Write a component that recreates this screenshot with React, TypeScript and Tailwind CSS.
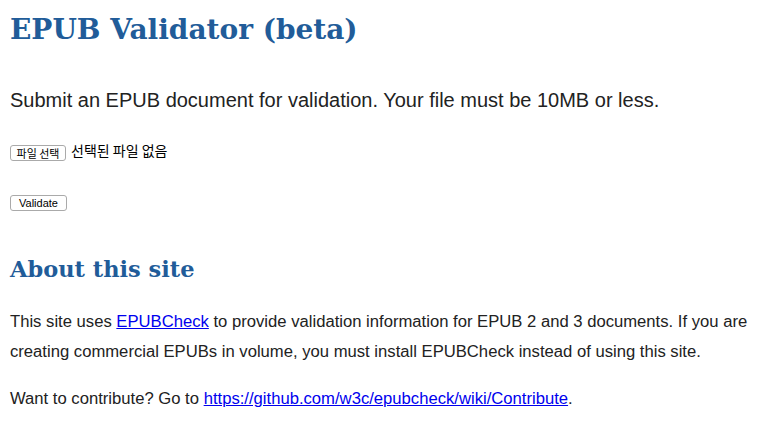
export default function App() {
  return (
    <div className="min-h-[429px] bg-white px-[10px] text-[#222]" style={{ fontFamily: '"Liberation Sans", Arial, sans-serif' }}>
      <h1 className="pt-[12px] text-[28px] font-bold leading-[36px] text-[#215c99]" style={{ fontFamily: '"DejaVu Serif", Georgia, serif' }}>
        EPUB Validator (beta)
      </h1>
      <p className="mt-[40px] text-[20px] leading-[24px]">
        Submit an EPUB document for validation. Your file must be 10MB or less.
      </p>
      <div className="mt-[28px] flex items-center gap-[5px]">
        <button className="mt-[5px] h-[16px] w-[56px] rounded-[3px] border border-[#aaa] bg-white text-[11px] leading-[14px] text-black" style={{ fontFamily: '"Noto Sans CJK KR", sans-serif' }}>
          파일 선택
        </button>
        <span className="text-[14px] text-black" style={{ fontFamily: '"Noto Sans CJK KR", sans-serif' }}>선택된 파일 없음</span>
      </div>
      <div className="mt-[29px]">
        <button className="h-[16px] w-[57px] rounded-[3px] border border-[#aaa] bg-white text-[11px] leading-[14px] text-black">
          Validate
        </button>
      </div>
      <h2 className="mt-[40px] text-[22.5px] font-bold leading-[30px] text-[#215c99]" style={{ fontFamily: '"DejaVu Serif", Georgia, serif' }}>
        About this site
      </h2>
      <p className="mt-[23px] text-[16.65px] leading-[30px]">
        This site uses <a href="#" className="text-[#0000ee] underline">EPUBCheck</a> to provide validation information for EPUB 2 and 3 documents. If you are creating commercial EPUBs in volume, you must install EPUBCheck instead of using this site.
      </p>
      <p className="mt-[17px] text-[16.65px] leading-[30px]">
        Want to contribute? Go to <a href="#" className="text-[#0000ee] underline">https://github.com/w3c/epubcheck/wiki/Contribute</a>.
      </p>
    </div>
  );
}
